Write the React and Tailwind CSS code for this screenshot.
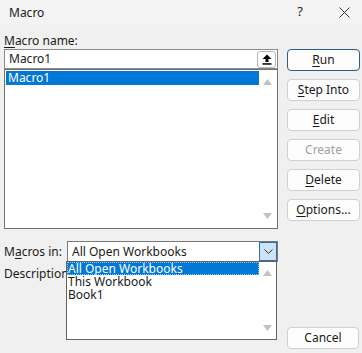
import React from "react";

const font = "font-['Segoe_UI','Noto_Sans','Open_Sans',sans-serif]";

const buttons = [
  { id: "run", key: "R", rest: "un", primary: true },
  { id: "step", key: "S", rest: "tep Into" },
  { id: "edit", key: "E", rest: "dit" },
  { id: "create", label: "Create", disabled: true },
  { id: "delete", key: "D", rest: "elete" },
  { id: "options", key: "O", rest: "ptions..." },
];

const UpTri = () => (
  <svg width="9" height="6" viewBox="0 0 9 6">
    <path d="M0 6 L4.5 0 L9 6 Z" fill="#c2c2c2" />
  </svg>
);

const DownTri = () => (
  <svg width="9" height="6" viewBox="0 0 9 6">
    <path d="M0 0 L4.5 6 L9 0 Z" fill="#c2c2c2" />
  </svg>
);

const ScrollTrack = () => (
  <div className="w-[17px] flex flex-col items-center justify-between py-[8px]">
    <UpTri />
    <DownTri />
  </div>
);

const DialogButton = ({ btn }) => (
  <button
    className={`h-[22px] w-[73px] rounded-[4px] bg-[#fdfdfd] text-[12px] leading-none flex items-center justify-center ${
      btn.primary ? "border border-[#2a5d88]" : "border border-[#d0d0d0]"
    } ${btn.disabled ? "text-[#a0a0a0]" : "text-[#1a1a1a]"}`}
  >
    {btn.label ? (
      btn.label
    ) : (
      <span>
        <span className="underline underline-offset-2">{btn.key}</span>
        {btn.rest}
      </span>
    )}
  </button>
);

export default function App() {
  return (
    <div className={`w-[362px] h-[353px] bg-[#f0f0f0] overflow-hidden flex flex-col ${font} text-[#1a1a1a]`}>
      {/* Title bar */}
      <div className="h-[24px] bg-[#f3f3f3] flex items-center pl-[9px] pr-[12px] text-[12px]">
        <span className="pt-[1px]">Macro</span>
        <span className="ml-auto mr-[36px] text-[13px]">?</span>
        <svg width="11" height="11" viewBox="0 0 11 11">
          <path d="M0.5 0.5 L10.5 10.5 M10.5 0.5 L0.5 10.5" stroke="#333" strokeWidth="1" />
        </svg>
      </div>

      {/* Body */}
      <div className="relative flex-1 flex pl-[4px] pr-[2px]">
        {/* Left column */}
        <div className="w-[274px] flex flex-col">
          <div className="h-[25px] pt-[9px] text-[12px] leading-[16px]">
            <span className="underline underline-offset-2">M</span>acro name:
          </div>
          <div className="h-[20px] border border-[#8a8a8a] bg-white flex items-center">
            <span className="pl-[4px] text-[12px] flex-1">Macro1</span>
            <div className="mr-[1px] w-[19px] h-[17px] rounded-[3px] border border-[#b8b8b8] bg-white flex items-center justify-center">
              <svg width="10" height="11" viewBox="0 0 10 11">
                <path d="M5 0.5 L9.5 5 H6.5 V8 H3.5 V5 H0.5 Z" fill="#000" />
                <rect x="0.5" y="9.2" width="9" height="1.5" fill="#000" />
              </svg>
            </div>
          </div>
          <div className="h-[160px] border border-[#707070] bg-white flex p-[1px]">
            <div className="flex-1 flex flex-col">
              <div className="h-[14px] bg-[#0078d7] text-white text-[12px] leading-[14px] pl-[2px]">
                Macro1
              </div>
            </div>
            <ScrollTrack />
          </div>

          <div className="mt-[12px] flex items-center h-[21px]">
            <span className="text-[12px] w-[63px]">
              M<span className="underline underline-offset-2">a</span>cros in:
            </span>
            <div className="w-[211px] h-[21px] border border-[#7a7a7a] bg-white flex items-center">
              <span className="pl-[4px] text-[12px] flex-1">All Open Workbooks</span>
              <div className="w-[18px] h-[19px] bg-[#cce4f7] border border-[#2f6ea5] flex items-center justify-center">
                <svg width="9" height="5" viewBox="0 0 9 5">
                  <path d="M0.5 0.5 L4.5 4.5 L8.5 0.5" stroke="#333" strokeWidth="1" fill="none" />
                </svg>
              </div>
            </div>
          </div>
          {/* label is cut off by the open dropdown */}
          <div className="mt-[4px] w-[62px] overflow-hidden whitespace-nowrap text-[12px] leading-[16px]">
            Description
          </div>
        </div>

        {/* Right column */}
        <div className="ml-[9px] pt-[25px] pb-[4px] flex flex-col gap-[8px]">
          {buttons.map((b) => (
            <DialogButton key={b.id} btn={b} />
          ))}
          <button className="mt-auto h-[22px] w-[72px] rounded-[4px] border border-[#d0d0d0] bg-[#fdfdfd] text-[12px] text-[#1a1a1a]">
            Cancel
          </button>
        </div>

        {/* Open dropdown list */}
        <div className="absolute left-[66px] top-[237px] w-[211px] h-[79px] border border-[#646464] bg-white flex">
          <div className="flex-1 flex flex-col text-[12px] leading-[13px]">
            <div className="bg-[#0078d7] text-white pl-[1px] outline outline-1 outline-dotted outline-[#9bc7ee] -outline-offset-1">
              All Open Workbooks
            </div>
            <div className="pl-[1px]">This Workbook</div>
            <div className="pl-[1px]">Book1</div>
          </div>
          <ScrollTrack />
        </div>
      </div>
    </div>
  );
}
